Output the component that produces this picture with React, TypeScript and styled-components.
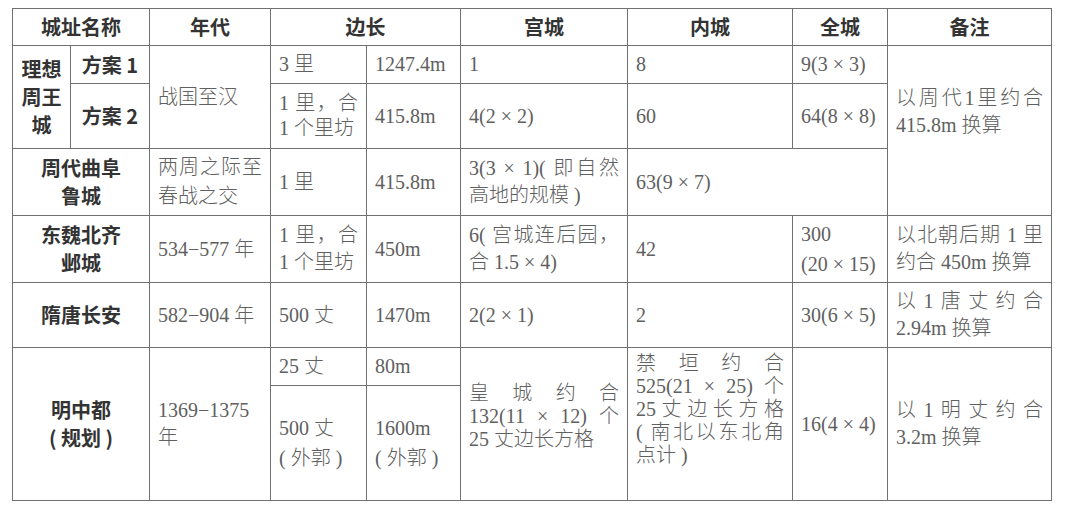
import styled, { createGlobalStyle } from 'styled-components';

const GlobalStyle = createGlobalStyle`
  html, body {
    margin: 0;
    padding: 0;
    background: #ffffff;
  }
`;

const Page = styled.div`
  padding: 8px 0 0 12px;
  background: #ffffff;
`;

const Table = styled.table`
  border-collapse: collapse;
  table-layout: fixed;
  width: 1039px;
  border: 1px solid #707070;
`;

const Col = styled.col<{ $w: number }>`
  width: ${(p) => p.$w}px;
`;

const Row = styled.tr<{ $h: number }>`
  height: ${(p) => p.$h}px;
`;

const HeadCell = styled.th`
  border: 1px solid #707070;
  padding: 0 6px;
  font-family: 'Noto Sans CJK SC', sans-serif;
  font-size: 20px;
  font-weight: 700;
  color: #333333;
  text-align: center;
  vertical-align: middle;
  line-height: 26px;
`;

const NameCell = styled.td`
  border: 1px solid #707070;
  padding: 0 6px;
  font-family: 'Noto Sans CJK SC', sans-serif;
  font-size: 20px;
  font-weight: 700;
  color: #333333;
  text-align: center;
  vertical-align: middle;
  line-height: 28px;
`;

const Cell = styled.td<{ $lh?: number; $padBottom?: number }>`
  border: 1px solid #707070;
  padding: 0 8px ${(p) => p.$padBottom ?? 0}px 8px;
  font-family: 'Liberation Serif', 'Noto Sans CJK SC', serif;
  font-size: 20px;
  font-weight: 300;
  color: #606060;
  text-align: left;
  vertical-align: middle;
  line-height: ${(p) => p.$lh ?? 27}px;
`;

const Line = styled.span<{ $fill?: boolean }>`
  display: block;
  white-space: nowrap;
  text-align: justify;
  text-align-last: ${(p) => (p.$fill ? 'justify' : 'auto')};
`;

// every line but the last is spread to the cell width, as in the printed table
function Lines({ items, justify = true }: { items: string[]; justify?: boolean }) {
  return (
    <>
      {items.map((t, i) => (
        <Line key={i} $fill={justify && i < items.length - 1}>
          {t}
        </Line>
      ))}
    </>
  );
}

const widths = [58, 79, 121, 96, 94, 167, 165, 95, 164];

export default function App() {
  return (
    <Page>
      <GlobalStyle />
      <Table>
        <colgroup>
          {widths.map((w, i) => (
            <Col key={i} $w={w} />
          ))}
        </colgroup>
        <thead>
          <Row $h={37}>
            <HeadCell colSpan={2}>城址名称</HeadCell>
            <HeadCell>年代</HeadCell>
            <HeadCell colSpan={2}>边长</HeadCell>
            <HeadCell>宫城</HeadCell>
            <HeadCell>内城</HeadCell>
            <HeadCell>全城</HeadCell>
            <HeadCell>备注</HeadCell>
          </Row>
        </thead>
        <tbody>
          <Row $h={38}>
            <NameCell rowSpan={2}>
              理想
              <br />
              周王
              <br />城
            </NameCell>
            <NameCell>方案 1</NameCell>
            <Cell rowSpan={2}>战国至汉</Cell>
            <Cell>3 里</Cell>
            <Cell>1247.4m</Cell>
            <Cell>1</Cell>
            <Cell>8</Cell>
            <Cell>9(3 × 3)</Cell>
            <Cell rowSpan={3} $padBottom={38}>
              <Lines items={['以周代1里约合', '415.8m 换算']} />
            </Cell>
          </Row>
          <Row $h={65}>
            <NameCell>方案 2</NameCell>
            <Cell $lh={25}>
              <Lines items={['1 里，合', '1 个里坊']} />
            </Cell>
            <Cell>415.8m</Cell>
            <Cell>4(2 × 2)</Cell>
            <Cell>60</Cell>
            <Cell>64(8 × 8)</Cell>
          </Row>
          <Row $h={67}>
            <NameCell colSpan={2}>
              周代曲阜
              <br />
              鲁城
            </NameCell>
            <Cell $lh={29}>
              <Lines items={['两周之际至', '春战之交']} />
            </Cell>
            <Cell>1 里</Cell>
            <Cell>415.8m</Cell>
            <Cell>
              <Lines items={['3(3 × 1)( 即自然', '高地的规模 )']} />
            </Cell>
            <Cell colSpan={2}>63(9 × 7)</Cell>
          </Row>
          <Row $h={67}>
            <NameCell colSpan={2}>
              东魏北齐
              <br />
              邺城
            </NameCell>
            <Cell>534−577 年</Cell>
            <Cell>
              <Lines items={['1 里，合', '1 个里坊']} />
            </Cell>
            <Cell>450m</Cell>
            <Cell>
              <Lines items={['6( 宫城连后园，', '合 1.5 × 4)']} />
            </Cell>
            <Cell>42</Cell>
            <Cell $lh={30}>
              <Lines items={['300', '(20 × 15)']} justify={false} />
            </Cell>
            <Cell>
              <Lines items={['以北朝后期 1 里', '约合 450m 换算']} />
            </Cell>
          </Row>
          <Row $h={65}>
            <NameCell colSpan={2}>隋唐长安</NameCell>
            <Cell>582−904 年</Cell>
            <Cell>500 丈</Cell>
            <Cell>1470m</Cell>
            <Cell>2(2 × 1)</Cell>
            <Cell>2</Cell>
            <Cell>30(6 × 5)</Cell>
            <Cell>
              <Lines items={['以1唐丈约合', '2.94m 换算']} />
            </Cell>
          </Row>
          <Row $h={38}>
            <NameCell colSpan={2} rowSpan={2}>
              明中都
              <br />( 规划 )
            </NameCell>
            <Cell rowSpan={2}>
              <Lines items={['1369−1375', '年']} justify={false} />
            </Cell>
            <Cell>25 丈</Cell>
            <Cell>80m</Cell>
            <Cell rowSpan={2} $lh={23} $padBottom={16}>
              <Lines items={['皇城约合', '132(11 × 12) 个', '25 丈边长方格']} />
            </Cell>
            <Cell rowSpan={2} $lh={23} $padBottom={30}>
              <Lines
                items={['禁垣约合', '525(21 × 25) 个', '25丈边长方格', '( 南北以东北角', '点计 )']}
              />
            </Cell>
            <Cell rowSpan={2}>16(4 × 4)</Cell>
            <Cell rowSpan={2}>
              <Lines items={['以1明丈约合', '3.2m 换算']} />
            </Cell>
          </Row>
          <Row $h={115}>
            <Cell $lh={30}>
              <Lines items={['500 丈', '( 外郭 )']} justify={false} />
            </Cell>
            <Cell $lh={30}>
              <Lines items={['1600m', '( 外郭 )']} justify={false} />
            </Cell>
          </Row>
        </tbody>
      </Table>
    </Page>
  );
}
